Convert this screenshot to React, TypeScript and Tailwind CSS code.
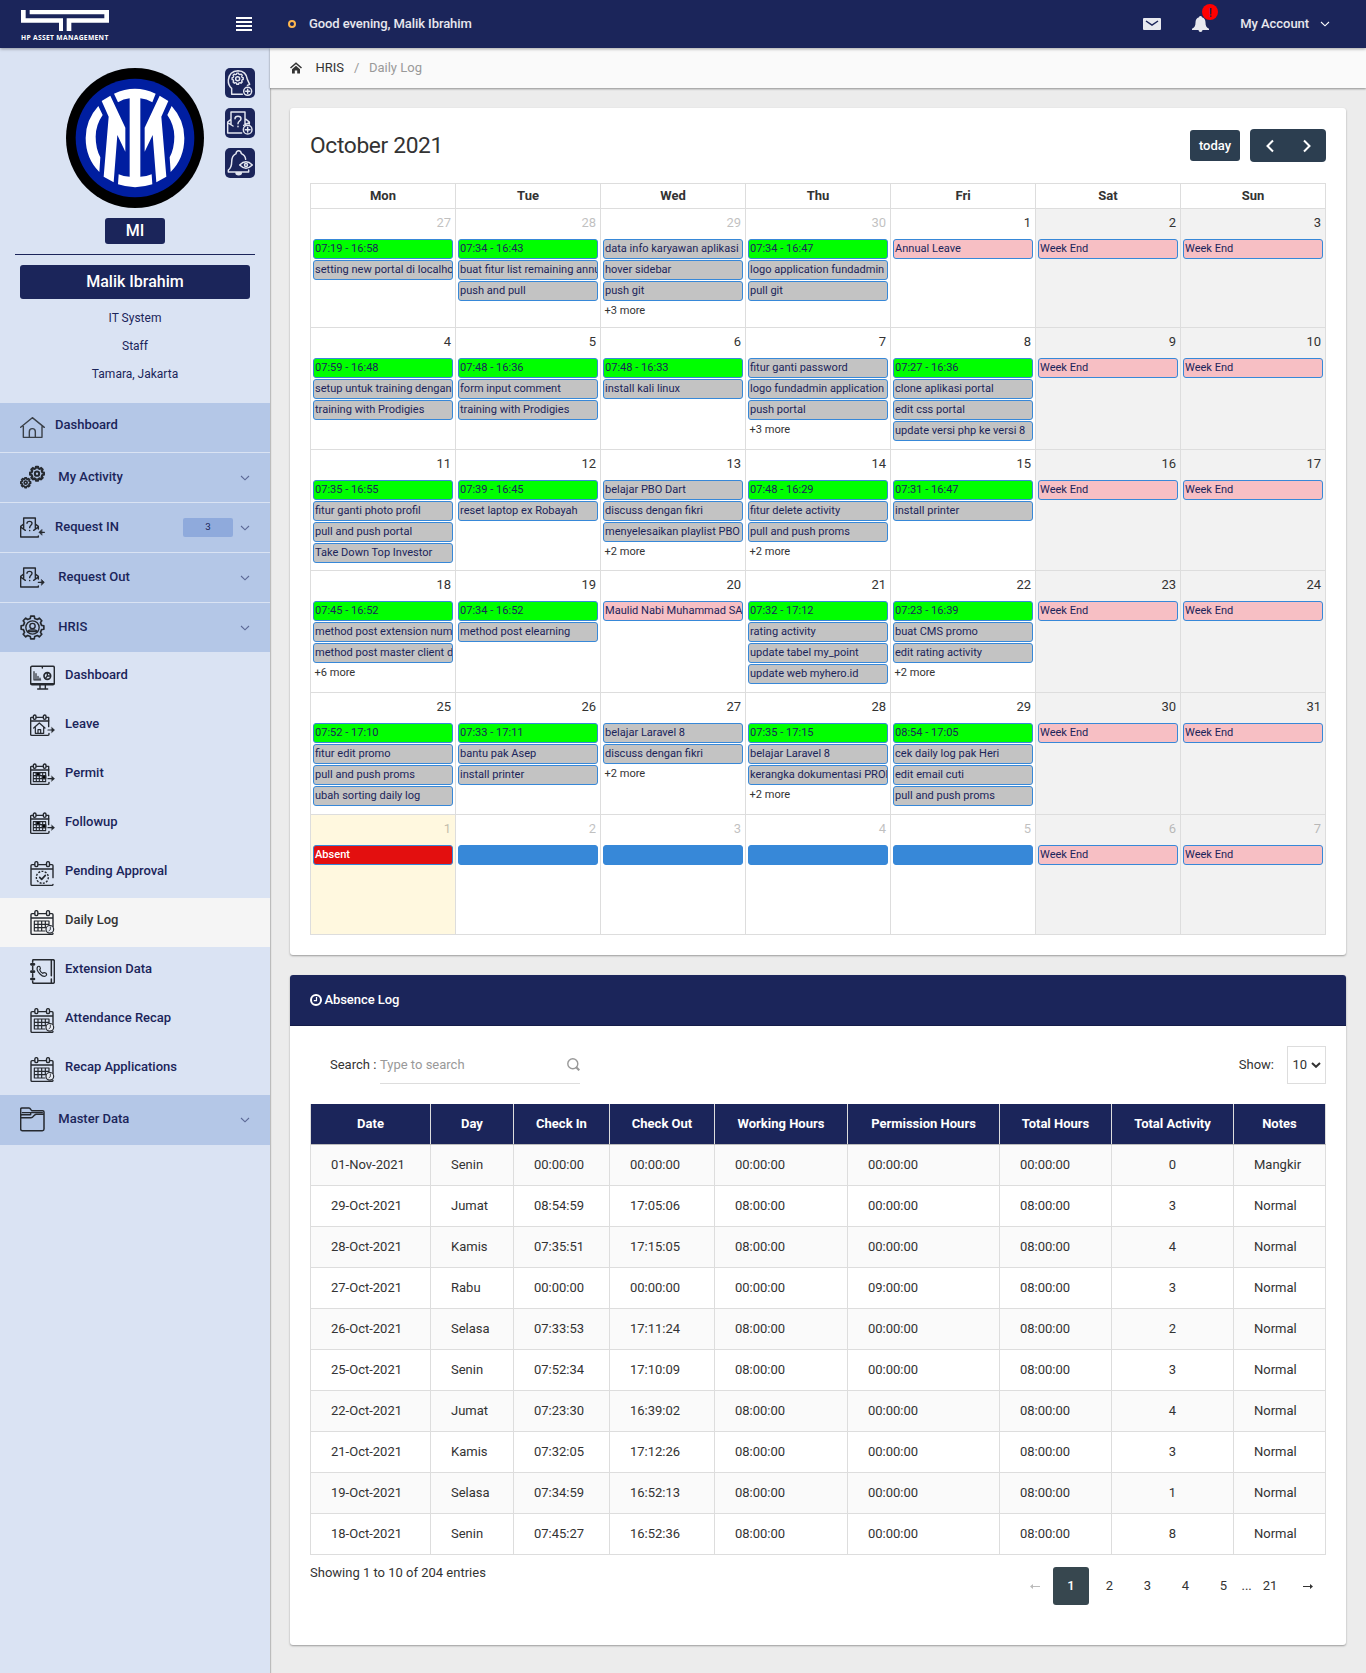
import React from "react";

/* ---------- small drawing helpers ---------- */

function Chevron({ className = "" }: { className?: string }) {
  return (
    <svg width="10" height="6" viewBox="0 0 10 6" fill="none" stroke="currentColor" strokeWidth="1.1" className={className}>
      <path d="M1 1 L5 4.8 L9 1" />
    </svg>
  );
}

function gearPath(cx: number, cy: number, outer: number, inner: number, teeth: number) {
  const pts: string[] = [];
  const step = (Math.PI * 2) / teeth;
  for (let i = 0; i < teeth; i++) {
    const a = i * step - Math.PI / 2;
    const spots: [number, number][] = [
      [-0.3, inner],
      [-0.2, outer],
      [0.2, outer],
      [0.3, inner],
    ];
    for (const [f, r] of spots) {
      const t = a + f * step;
      pts.push(`${(cx + r * Math.cos(t)).toFixed(1)} ${(cy + r * Math.sin(t)).toFixed(1)}`);
    }
  }
  return "M" + pts.join("L") + "Z";
}

function Icon({ children }: { children: React.ReactNode }) {
  return (
    <svg
      width="25"
      height="25"
      viewBox="0 0 75 75"
      fill="none"
      stroke="#25292f"
      strokeWidth="4.2"
      strokeLinejoin="round"
      strokeLinecap="round"
      className="shrink-0"
    >
      {children}
    </svg>
  );
}

const HomeIcon = () => (
  <Icon>
    <path d="M2 37 L37 8 L73 37 M10 34 V67 H66 V34 M28 67 V50 a9 9 0 0 1 18 0 V67" stroke="#3a4048" />
  </Icon>
);

const GearsIcon = () => (
  <Icon>
    <path d={gearPath(51, 26, 21, 16.5, 8)} strokeWidth="6.5" />
    <circle cx="51" cy="26" r="6.5" strokeWidth="6" />
    <path d={gearPath(17, 53, 15, 11.5, 8)} strokeWidth="5" />
    <circle cx="17" cy="53" r="4.5" strokeWidth="5" />
  </Icon>
);

const Envelope = () => (
  <>
    <path d="M11 27 L2 34 V66 H55 V63 M46 27 L55 34 V42 M11 40 V9 H46 V40 M2 36 L16 46 M55 36 L41 46" />
    <path d="M21 25 C21 17 36 17 36 25 C36 31 29 31 29 38 M29 46 V47" />
  </>
);

const RequestInIcon = () => (
  <Icon>
    <Envelope />
    <path d="M73 52 H60" />
    <path d="M65 44 L57 52 L65 60 Z" fill="#25292f" strokeWidth="2" />
  </Icon>
);

const RequestOutIcon = () => (
  <Icon>
    <Envelope />
    <path d="M55 52 H70" />
    <path d="M65 44 L73 52 L65 60 Z" fill="#25292f" strokeWidth="2" />
  </Icon>
);

const HrisIcon = () => (
  <Icon>
    <path d={gearPath(37.5, 37.5, 34.5, 28, 8)} strokeWidth="5" />
    <circle cx="37.5" cy="37.5" r="20" />
    <circle cx="37.5" cy="33" r="8" />
    <path d="M22 50 q4 -5 10 -5 h11 q6 0 10 5 Z" />
  </Icon>
);

const MonitorIcon = () => (
  <Icon>
    <rect x="2" y="4" width="71" height="55" rx="4" strokeWidth="4.5" />
    <path d="M4 56 H71 M30 60 V71 M46 60 V71 M23 72 H53 M37 5 V9" />
    <path d="M12 20 V45 H32 M18 26 V44 M24 34 V44 M30 39 V44" strokeWidth="3.5" />
    <circle cx="52" cy="33" r="10" strokeWidth="5" />
    <path d="M52 24 V33 H61 M52 33 L46 40" />
  </Icon>
);

const SmallCalFrame = () => (
  <path d="M9 10 H4 q-2 0 -2 3 V61 q0 3 3 3 H54 q3 0 3 -3 V58 M20 10 H38 M50 10 H56 V38 M2 21 H57 M14 3 a4 4 0 0 1 4 4 v5 a4 4 0 0 1 -8 0 v-5 a4 4 0 0 1 4 -4 M44 3 a4 4 0 0 1 4 4 v5 a4 4 0 0 1 -8 0 v-5 a4 4 0 0 1 4 -4" />
);

const LeaveIcon = () => (
  <Icon>
    <SmallCalFrame />
    <path d="M11 42 L28 27 L45 42 M16 40 V58 H41 V40 M24 58 V47 h8 V58 M54 48 H68" strokeWidth="3.6" />
    <path d="M65 40 L74 48 L65 56 Z" fill="#25292f" strokeWidth="1" />
  </Icon>
);

const PermitIcon = () => (
  <Icon>
    <SmallCalFrame />
    <path d="M10 29 H47 V56 H10 Z M10 38 H47 M10 47 H47 M19 29 V56 M28 29 V56 M38 29 V56" strokeWidth="3.3" />
    <path d="M19 29 h10 v9 h-10 z M37 38 h10 v9 h-10 z" fill="#000" />
    <path d="M54 47 H68" />
    <path d="M65 39 L74 47 L65 55 Z" fill="#25292f" strokeWidth="1" />
  </Icon>
);

const LargeCalFrame = () => (
  <path d="M12 11 H6 q-3 0 -3 3 V70 q0 3 3 3 H66 q3 0 3 -3 M27 11 H47 M61 11 H66 q3 0 3 3 V50 M3 24 H69 M19 2 a4.5 4.5 0 0 1 4.5 4.5 v6 a4.5 4.5 0 0 1 -9 0 v-6 a4.5 4.5 0 0 1 4.5 -4.5 M54 2 a4.5 4.5 0 0 1 4.5 4.5 v6 a4.5 4.5 0 0 1 -9 0 v-6 a4.5 4.5 0 0 1 4.5 -4.5" />
);

const PendingIcon = () => (
  <Icon>
    <LargeCalFrame />
    <circle cx="37" cy="49" r="18" strokeDasharray="6 4" strokeLinecap="butt" />
    <path d="M29 49 L35 55 L46 43" strokeWidth="5" />
  </Icon>
);

const CalendarClockIcon = () => (
  <Icon>
    <LargeCalFrame />
    <path d="M13 33 H57 V44 M13 33 V63 H45 M13 43 H57 M13 53 H47 M24 33 V63 M35 33 V63 M46 33 V50" strokeWidth="3.6" />
    <circle cx="59.5" cy="58" r="11.5" fill="#e6eaf2" strokeWidth="3.5" />
    <path d="M61 51 V59 L57 62" strokeWidth="2.6" />
  </Icon>
);

const PhonebookIcon = () => (
  <Icon>
    <path d="M8 10 V5 q0 -3 3 -3 H68 q5 0 5 4 V68 q0 5 -5 5 H11 q-3 0 -3 -3 V66 M8 22 V32 M8 44 V54 M64 4 V50 M64 60 V71" strokeWidth="4.5" />
    <path d="M4 16 h8 M4 38 h8 M4 60 h8" strokeWidth="8" />
    <path d="M23 23 q4 -3 7 1 q3 5 -1 8 q2 7 9 11 q4 -4 9 -1 q5 4 1 8 q-7 6 -18 -5 q-13 -13 -7 -22z" strokeWidth="3.6" />
  </Icon>
);

const FolderIcon = () => (
  <Icon>
    <path
      d="M2 66 V7 q0 -4 4 -4 H27 q3 0 5 4 l3 4 H68 q4 0 4 4 V66 q0 5 -5 5 H7 q-5 0 -5 -5 M2 32 V26 q0 -3 4 -3 H30 M2 32 H33 q4 0 7 -4 l4 -4 q2 -2 5 -2 H72"
      strokeWidth="4.5"
    />
    <path d="M7 17 H67 M32 17 V23" />
  </Icon>
);

/* ---------- top bar ---------- */

function Header() {
  return (
    <header className="relative z-10 flex h-12 items-center bg-[#1b255a] text-white shadow-[0_1px_3px_rgba(0,0,0,0.35)]">
      <div className="flex w-[270px] items-center justify-between pr-[18px] pl-[21px]">
        <div className="flex w-[88px] flex-col pt-[2px]">
          <svg width="88" height="21" viewBox="0 0 264 63" fill="#fff">
            <path d="M0 0 H14 V25 H126 V63 H114 V38 H0 Z" />
            <path d="M26 0 H264 V38 H151 V63 H137 V25 H250 V13 H26 Z" />
          </svg>
          <span className="mt-[4px] h-[6px] text-[6.7px] leading-[6px] font-bold tracking-[0.33px] whitespace-nowrap [font-family:'Open_Sans',sans-serif]">
            HP ASSET MANAGEMENT
          </span>
        </div>
        <svg width="16" height="14" viewBox="0 0 16 14" fill="#fff">
          <path d="M0 0h16v2H0zM0 4h16v2H0zM0 8h16v2H0zM0 12h16v2H0z" />
        </svg>
      </div>
      <div className="flex flex-1 items-center pr-9 pl-[18px]">
        <span className="size-2 rounded-full border-2 border-[#ffb74d]" />
        <span className="ml-[13px] text-[13px] font-medium tracking-[-0.08px] text-white/90">Good evening, Malik Ibrahim</span>
        <div className="ml-auto flex items-center">
          <svg width="18" height="12" viewBox="0 0 18 12">
            <rect width="18" height="12" rx="1" fill="#e8e9ef" />
            <path d="M3 3 L9 7 L15 3" fill="none" stroke="#1b255a" strokeWidth="1.5" />
          </svg>
          <div className="relative ml-[31px] h-4 w-4">
            <svg width="17" height="16" viewBox="0 0 17 16" fill="#e8e9ef">
              <path d="M8.500 0 a1.500 1.500 0 0 1 1.500 1.300 C12.500 2 13.500 4 13.500 6.500 C13.500 10 14.500 11.500 17 12.700 V14 H0 V12.700 C2.500 11.500 3.500 10 3.500 6.500 C3.500 4 4.500 2 7 1.300 A1.500 1.500 0 0 1 8.500 0 Z M6.500 14 H10.500 a2 2 0 0 1 -4 0 Z" />
            </svg>
            <span className="absolute -top-3 left-[10px] flex size-4 items-center justify-center rounded-full bg-[#ff0000] text-[13px] leading-none font-medium text-[#1b255a]">
              !
            </span>
          </div>
          <span className="ml-8 text-[13px] font-medium tracking-[-0.06px] text-white/90">My Account</span>
          <Chevron className="ml-[11px] text-white" />
        </div>
      </div>
    </header>
  );
}

/* ---------- sidebar ---------- */

function ClubCrest() {
  return (
    <svg width="138" height="140" viewBox="198 204 414 420">
      <ellipse cx="405" cy="414" rx="207" ry="210" fill="#000" />
      <ellipse cx="405" cy="414" rx="178" ry="178" fill="#001ea0" />
      <g fill="#fff">
        <path d="M295 318 Q257 360 257 414 Q257 475 298 516 L301 472 Q287 445 287 410 Q287 375 308 345 Z" />
        <path d="M515 318 Q553 360 553 414 Q553 475 512 516 L509 472 Q523 445 523 410 Q523 375 502 345 Z" />
        <path d="M305 303 L331 287 L376 383 V455 L352 405 L341 547 L311 530 L326 350 Z" />
        <path d="M505 303 L479 287 L434 383 V455 L458 405 L469 547 L499 530 L484 350 Z" />
        <path d="M342 281 Q405 252 467 281 L457 307 Q440 297 421 295 V530 Q440 530 455 523 L457 553 Q405 570 354 553 L356 523 Q370 530 389 530 V295 Q370 297 354 307 Z" />
      </g>
    </svg>
  );
}

function QuickButton({ children }: { children: React.ReactNode }) {
  return (
    <div className="size-[30px] overflow-hidden rounded-[5px] bg-[#1b255a]">
      <svg
        width="30"
        height="30"
        viewBox="0 0 90 90"
        fill="none"
        stroke="#e3e6f0"
        strokeWidth="4.4"
        strokeLinejoin="round"
        strokeLinecap="round"
      >
        {children}
      </svg>
    </div>
  );
}

function Profile() {
  return (
    <div className="flex h-[355px] flex-col text-[#1b255a]">
      <div className="flex pt-5 pl-[66px]">
        <ClubCrest />
        <div className="ml-[21px] flex flex-col gap-[10px]">
          <QuickButton>
            <path d="M20 79 V61 Q9 52 10 36 Q13 9 39 8 Q64 9 67 34 L74 49 L67 52 M20 79 H52" />
            <path d={gearPath(38, 32, 17, 14, 8)} strokeWidth="4" />
            <circle cx="38" cy="32" r="6" />
            <circle cx="68" cy="70" r="12" />
            <path d="M68 64 V76 M62 70 H74" />
          </QuickButton>
          <QuickButton>
            <path d="M18 34 L8 42 V75 H50 M63 34 L73 42 V48 M18 50 V12 H60 V50 M8 44 L24 54 M72 44 L56 52" />
            <path d="M30 32 C30 22 48 22 48 32 C48 39 39 39 39 47 M39 55 V56" />
            <circle cx="68" cy="65" r="13" />
            <path d="M68 58 V72 M61 65 H75" />
          </QuickButton>
          <QuickButton>
            <path d="M33 17 Q34 8 41 8 Q48 8 49 17 Q61 22 62 34 M33 17 Q20 23 20 42 Q20 59 10 66 V72 H71 V66" />
            <path d="M33 74 a8 6 0 0 0 16 0 Z" fill="#e3e6f0" />
            <path d="M44 51 Q63 32 82 51 Q63 70 44 51 Z" />
            <circle cx="63" cy="51" r="4.5" />
          </QuickButton>
        </div>
      </div>
      <div className="mt-[10px] flex h-[26px] w-[60px] items-center justify-center self-center rounded-[3px] bg-[#1b255a] text-base leading-none font-medium text-white">
        MI
      </div>
      <div className="mx-[15px] mt-[10px] h-px bg-[#1b255a]" />
      <div className="mx-5 mt-[10px] flex h-[34px] items-center justify-center rounded-[3px] bg-[#1b255a] text-base leading-none font-medium text-white">
        Malik Ibrahim
      </div>
      <div className="mt-[5px] text-center text-xs leading-[28px]">
        <p>IT System</p>
        <p>Staff</p>
        <p>Tamara, Jakarta</p>
      </div>
    </div>
  );
}

function MenuItem({
  icon,
  label,
  badge,
  wide = true,
  arrow = true,
  last = false,
}: {
  icon: React.ReactNode;
  label: string;
  badge?: string;
  wide?: boolean;
  arrow?: boolean;
  last?: boolean;
}) {
  return (
    <div
      className={`flex h-[50px] items-center border-b bg-[#b4c7e7] pr-5 pl-5 ${last ? "border-[#b4c7e7]" : "border-[#dae3f3]"}`}
    >
      {icon}
      <span
        className={`text-[13px] leading-5 font-medium ${wide ? "ml-[13.3px]" : "ml-[10px]"} ${arrow ? "-mt-px" : "-mt-[6px]"}`}
      >
        {label}
      </span>
      <div className="ml-auto flex items-center">
        {badge && (
          <span className="mr-[7px] flex h-[19px] w-[50px] items-center justify-center rounded-[2px] bg-[#8faadc] text-[9.75px]">
            {badge}
          </span>
        )}
        {arrow && <Chevron className="text-[#5c6996]" />}
      </div>
    </div>
  );
}

function SubItem({ icon, label, active = false }: { icon: React.ReactNode; label: string; active?: boolean }) {
  return (
    <div className={`flex h-[49px] pl-[30px] ${active ? "bg-[#f5f5f5] text-[#333]" : ""}`}>
      <div className="mt-3">{icon}</div>
      <span className="mt-3 ml-[10px] text-[13px] leading-5 font-medium">{label}</span>
    </div>
  );
}

function Sidebar() {
  return (
    <aside className="min-h-[1625px] w-[270px] shrink-0 bg-[#dae3f3] text-[#1b255a] shadow-[1px_0_1px_rgba(0,0,0,0.2)]">
      <Profile />
      <nav>
        <MenuItem icon={<HomeIcon />} label="Dashboard" wide={false} arrow={false} />
        <MenuItem icon={<GearsIcon />} label="My Activity" />
        <MenuItem icon={<RequestInIcon />} label="Request IN" badge="3" wide={false} />
        <MenuItem icon={<RequestOutIcon />} label="Request Out" />
        <MenuItem icon={<HrisIcon />} label="HRIS" />
        <div>
          <SubItem icon={<MonitorIcon />} label="Dashboard" />
          <SubItem icon={<LeaveIcon />} label="Leave" />
          <SubItem icon={<PermitIcon />} label="Permit" />
          <SubItem icon={<PermitIcon />} label="Followup" />
          <SubItem icon={<PendingIcon />} label="Pending Approval" />
          <SubItem icon={<CalendarClockIcon />} label="Daily Log" active />
          <SubItem icon={<PhonebookIcon />} label="Extension Data" />
          <SubItem icon={<CalendarClockIcon />} label="Attendance Recap" />
          <SubItem icon={<CalendarClockIcon />} label="Recap Applications" />
        </div>
        <div className="pt-px">
          <MenuItem icon={<FolderIcon />} label="Master Data" last />
        </div>
      </nav>
    </aside>
  );
}

/* ---------- calendar ---------- */

type Day = { n: number; other?: boolean; today?: boolean; ev?: string[]; more?: number };

const WEEKEND = ["p:Week End"];

const weeks: { h: string; days: Day[] }[] = [
  {
    h: "h-[119px]",
    days: [
      { n: 27, other: true, ev: ["g:07:19 - 16:58", "a:setting new portal di localhost"] },
      { n: 28, other: true, ev: ["g:07:34 - 16:43", "a:buat fitur list remaining annual", "a:push and pull"] },
      { n: 29, other: true, ev: ["a:data info karyawan aplikasi", "a:hover sidebar", "a:push git"], more: 3 },
      { n: 30, other: true, ev: ["g:07:34 - 16:47", "a:logo application fundadmin", "a:pull git"] },
      { n: 1, ev: ["p:Annual Leave"] },
      { n: 2, ev: WEEKEND },
      { n: 3, ev: WEEKEND },
    ],
  },
  {
    h: "h-[122px]",
    days: [
      { n: 4, ev: ["g:07:59 - 16:48", "a:setup untuk training dengan", "a:training with Prodigies"] },
      { n: 5, ev: ["g:07:48 - 16:36", "a:form input comment", "a:training with Prodigies"] },
      { n: 6, ev: ["g:07:48 - 16:33", "a:install kali linux"] },
      { n: 7, ev: ["a:fitur ganti password", "a:logo fundadmin application", "a:push portal"], more: 3 },
      { n: 8, ev: ["g:07:27 - 16:36", "a:clone aplikasi portal", "a:edit css portal", "a:update versi php ke versi 8"] },
      { n: 9, ev: WEEKEND },
      { n: 10, ev: WEEKEND },
    ],
  },
  {
    h: "h-[121px]",
    days: [
      { n: 11, ev: ["g:07:35 - 16:55", "a:fitur ganti photo profil", "a:pull and push portal", "a:Take Down Top Investor"] },
      { n: 12, ev: ["g:07:39 - 16:45", "a:reset laptop ex Robayah"] },
      { n: 13, ev: ["a:belajar PBO Dart", "a:discuss dengan fikri", "a:menyelesaikan playlist PBO"], more: 2 },
      { n: 14, ev: ["g:07:48 - 16:29", "a:fitur delete activity", "a:pull and push proms"], more: 2 },
      { n: 15, ev: ["g:07:31 - 16:47", "a:install printer"] },
      { n: 16, ev: WEEKEND },
      { n: 17, ev: WEEKEND },
    ],
  },
  {
    h: "h-[122px]",
    days: [
      { n: 18, ev: ["g:07:45 - 16:52", "a:method post extension number", "a:method post master client data"], more: 6 },
      { n: 19, ev: ["g:07:34 - 16:52", "a:method post elearning"] },
      { n: 20, ev: ["p:Maulid Nabi Muhammad SAW"] },
      { n: 21, ev: ["g:07:32 - 17:12", "a:rating activity", "a:update tabel my_point", "a:update web myhero.id"] },
      { n: 22, ev: ["g:07:23 - 16:39", "a:buat CMS promo", "a:edit rating activity"], more: 2 },
      { n: 23, ev: WEEKEND },
      { n: 24, ev: WEEKEND },
    ],
  },
  {
    h: "h-[122px]",
    days: [
      { n: 25, ev: ["g:07:52 - 17:10", "a:fitur edit promo", "a:pull and push proms", "a:ubah sorting daily log"] },
      { n: 26, ev: ["g:07:33 - 17:11", "a:bantu pak Asep", "a:install printer"] },
      { n: 27, ev: ["a:belajar Laravel 8", "a:discuss dengan fikri"], more: 2 },
      { n: 28, ev: ["g:07:35 - 17:15", "a:belajar Laravel 8", "a:kerangka dokumentasi PROMS"], more: 2 },
      { n: 29, ev: ["g:08:54 - 17:05", "a:cek daily log pak Heri", "a:edit email cuti", "a:pull and push proms"] },
      { n: 30, ev: WEEKEND },
      { n: 31, ev: WEEKEND },
    ],
  },
  {
    h: "h-[120px]",
    days: [
      { n: 1, other: true, today: true, ev: ["r:Absent"] },
      { n: 2, other: true, ev: ["b:"] },
      { n: 3, other: true, ev: ["b:"] },
      { n: 4, other: true, ev: ["b:"] },
      { n: 5, other: true, ev: ["b:"] },
      { n: 6, other: true, ev: WEEKEND },
      { n: 7, other: true, ev: WEEKEND },
    ],
  },
];

const eventColors: Record<string, string> = {
  g: "bg-[#00ff00] text-[#1b255a]",
  a: "bg-[#c3c3c3] text-[#1b255a]",
  p: "bg-[#f7bfc4] text-[#1b255a]",
  r: "bg-[#e30f0f] text-white font-medium",
  b: "bg-[#3788d8]",
};

function Calendar() {
  return (
    <section className="h-[847px] rounded-[3px] bg-white p-5 shadow-[0_1px_2px_rgba(0,0,0,0.35)]">
      <div className="flex h-[55px] items-start justify-between">
        <h2 className="mt-[3px] text-[22.75px] leading-[30px] font-normal tracking-[-0.015em] text-[#333]">October 2021</h2>
        <div className="flex items-center gap-[10px] pt-px">
          <button className="h-[31px] w-[50px] rounded-[3px] bg-[#2c3e50] text-[13px] leading-5 font-medium text-white">today</button>
          <div className="flex h-[33px] w-[76px] items-center justify-around rounded-[4px] bg-[#2c3e50] px-[1px]">
            <svg width="10" height="14" viewBox="0 0 10 14" fill="none" stroke="#fff" strokeWidth="2">
              <path d="M8 1.5 L2.5 7 L8 12.5" />
            </svg>
            <svg width="10" height="14" viewBox="0 0 10 14" fill="none" stroke="#fff" strokeWidth="2">
              <path d="M2 1.5 L7.5 7 L2 12.5" />
            </svg>
          </div>
        </div>
      </div>
      <div className="border-t border-l border-[#ddd]">
        <div className="grid h-[25px] grid-cols-7 border-b border-[#ddd]">
          {["Mon", "Tue", "Wed", "Thu", "Fri", "Sat", "Sun"].map((d) => (
            <div key={d} className="border-r border-[#ddd] text-center text-[13px] leading-6 font-bold text-[#333]">
              {d}
            </div>
          ))}
        </div>
        {weeks.map((w, wi) => (
          <div key={wi} className={`grid grid-cols-7 border-b border-[#ddd] ${w.h}`}>
            {w.days.map((d, di) => (
              <div
                key={di}
                className={`min-w-0 border-r border-[#ddd] px-[2px] ${d.today ? "bg-[#fff8df]" : di > 4 ? "bg-[#f2f2f2]" : ""}`}
              >
                <div className={`h-[30px] pt-1 pr-[2px] text-right text-[13px] leading-5 text-[#333] ${d.other ? "opacity-30" : ""}`}>
                  {d.n}
                </div>
                {d.ev?.map((e, ei) => (
                  <div
                    key={ei}
                    className={`mb-px h-5 overflow-hidden rounded-[3px] border border-[#3788d8] pl-px text-[11.05px] leading-[17px] whitespace-nowrap ${eventColors[e[0]]}`}
                  >
                    {e.slice(2)}
                  </div>
                ))}
                {d.more && <div className="pl-[1.5px] text-[11.05px] leading-[17px] text-[#333]">+{d.more} more</div>}
              </div>
            ))}
          </div>
        ))}
      </div>
    </section>
  );
}

/* ---------- absence table ---------- */

const heads = ["Date", "Day", "Check In", "Check Out", "Working Hours", "Permission Hours", "Total Hours", "Total Activity", "Notes"];

const rows = [
  ["01-Nov-2021", "Senin", "00:00:00", "00:00:00", "00:00:00", "00:00:00", "00:00:00", "0", "Mangkir"],
  ["29-Oct-2021", "Jumat", "08:54:59", "17:05:06", "08:00:00", "00:00:00", "08:00:00", "3", "Normal"],
  ["28-Oct-2021", "Kamis", "07:35:51", "17:15:05", "08:00:00", "00:00:00", "08:00:00", "4", "Normal"],
  ["27-Oct-2021", "Rabu", "00:00:00", "00:00:00", "00:00:00", "09:00:00", "08:00:00", "3", "Normal"],
  ["26-Oct-2021", "Selasa", "07:33:53", "17:11:24", "08:00:00", "00:00:00", "08:00:00", "2", "Normal"],
  ["25-Oct-2021", "Senin", "07:52:34", "17:10:09", "08:00:00", "00:00:00", "08:00:00", "3", "Normal"],
  ["22-Oct-2021", "Jumat", "07:23:30", "16:39:02", "08:00:00", "00:00:00", "08:00:00", "4", "Normal"],
  ["21-Oct-2021", "Kamis", "07:32:05", "17:12:26", "08:00:00", "00:00:00", "08:00:00", "3", "Normal"],
  ["19-Oct-2021", "Selasa", "07:34:59", "16:52:13", "08:00:00", "00:00:00", "08:00:00", "1", "Normal"],
  ["18-Oct-2021", "Senin", "07:45:27", "16:52:36", "08:00:00", "00:00:00", "08:00:00", "8", "Normal"],
];

const cols = "grid grid-cols-[120px_83px_96px_105px_133px_152px_112px_122px_92px]";

function AbsenceLog() {
  return (
    <section className="mt-5 h-[670px] rounded-[3px] bg-white text-[13px] text-[#333] shadow-[0_1px_2px_rgba(0,0,0,0.35)]">
      <div className="flex h-[51px] items-center rounded-t-[3px] border-b border-[#141c48] bg-[#1b255a] px-5 font-medium tracking-[-0.05px] text-white">
        <svg width="12" height="12" viewBox="0 0 12 12" fill="none" stroke="#fff" className="mr-[2.4px]">
          <circle cx="6" cy="6" r="5" strokeWidth="2" />
          <path d="M6.500 3 V6.600 H3.800" strokeWidth="1.200" />
        </svg>
        Absence Log
      </div>
      <div className="flex h-[78px] items-start justify-between px-5 pt-5">
        <div className="flex pl-5">
          <span className="w-[50px] leading-[37px]">Search :</span>
          <div className="flex h-[38px] w-[200px] items-center justify-between border-b border-[#ddd] text-[#999]">
            <span>Type to search</span>
            <svg width="13" height="13" viewBox="0 0 13 13" fill="none" stroke="#999">
              <circle cx="5.8" cy="5.8" r="5" strokeWidth="1.4" />
              <path d="M9 9 L12.3 12.3" strokeWidth="2.2" />
            </svg>
          </div>
        </div>
        <div className="flex">
          <span className="mr-[13px] leading-[37px]">Show:</span>
          <div className="flex h-[38px] w-[39px] items-center border border-[#ddd] pl-[4.5px]">
            10
            <svg width="10" height="6" viewBox="0 0 10 6" fill="none" stroke="#333" strokeWidth="2" className="ml-[4px]">
              <path d="M1 1 L5 4.8 L9 1" />
            </svg>
          </div>
        </div>
      </div>
      <div className="mx-5 border-l border-[#ddd]">
        <div className={`${cols} h-[41px] border-b border-[#bbb]`}>
          {heads.map((h) => (
            <div key={h} className="border-r border-[#ddd] bg-[#1b255a] text-center leading-[39px] font-bold whitespace-nowrap text-white">
              {h}
            </div>
          ))}
        </div>
        {rows.map((r, i) => (
          <div key={r[0]} className={`${cols} h-[41px] border-b border-[#ddd] ${i % 2 === 0 ? "bg-[#fafafa]" : ""}`}>
            {r.map((c, j) => (
              <div key={j} className={`border-r border-[#ddd] leading-[39px] ${j === 7 ? "text-center" : "pl-5"}`}>
                {c}
              </div>
            ))}
          </div>
        ))}
      </div>
      <div className="flex items-start justify-between px-5 pt-2">
        <span className="leading-5">Showing 1 to 10 of 204 entries</span>
        <div className="mt-1 flex h-[38px] text-center leading-[37px]">
          <span className="flex w-9 items-center justify-center text-[#bbb]">
            <svg width="10" height="5" viewBox="0 0 10 5" fill="currentColor">
              <path d="M0 2.5 L3 0 V2 H10 V3 H3 V5 Z" />
            </svg>
          </span>
          <span className="w-9 rounded-[3px] bg-[#37474f] font-medium text-white">1</span>
          <span className="ml-[2.5px] w-9">2</span>
          <span className="ml-[2px] w-9">3</span>
          <span className="ml-[2px] w-9">4</span>
          <span className="ml-[2px] w-9">5</span>
          <span className="w-[9.5px]">...</span>
          <span className="w-[38px]">21</span>
          <span className="ml-[1px] flex w-9 items-center justify-center">
            <svg width="10" height="5" viewBox="0 0 10 5" fill="currentColor">
              <path d="M10 2.5 L7 0 V2 H0 V3 H7 V5 Z" />
            </svg>
          </span>
        </div>
      </div>
    </section>
  );
}

export default function App() {
  return (
    <div className="min-h-[1673px] w-[1366px] bg-[#ececec] [font-family:Roboto,sans-serif]">
      <Header />
      <div className="flex">
        <Sidebar />
        <main className="min-w-0 flex-1">
          <div className="flex h-10 items-center bg-[#fafafa] pl-5 text-[13px] text-[#333] shadow-[0_1px_2px_rgba(0,0,0,0.4)]">
            <svg width="12" height="12" viewBox="0 0 12 12" fill="none" stroke="#333">
              <path d="M0.5 6 L6 1.2 L11.5 6" strokeWidth="1.5" />
              <path d="M2 7.2 L6 3.8 L10 7.2 V11.5 H7.2 V8.5 H4.8 V11.5 H2 Z" fill="#333" stroke="none" />
            </svg>
            <span className="ml-[13.5px]">HRIS</span>
            <span className="ml-[10px] text-[#999]">/</span>
            <span className="ml-[9.5px] text-[#999]">Daily Log</span>
          </div>
          <div className="px-5 pt-5">
            <Calendar />
            <AbsenceLog />
          </div>
        </main>
      </div>
    </div>
  );
}
